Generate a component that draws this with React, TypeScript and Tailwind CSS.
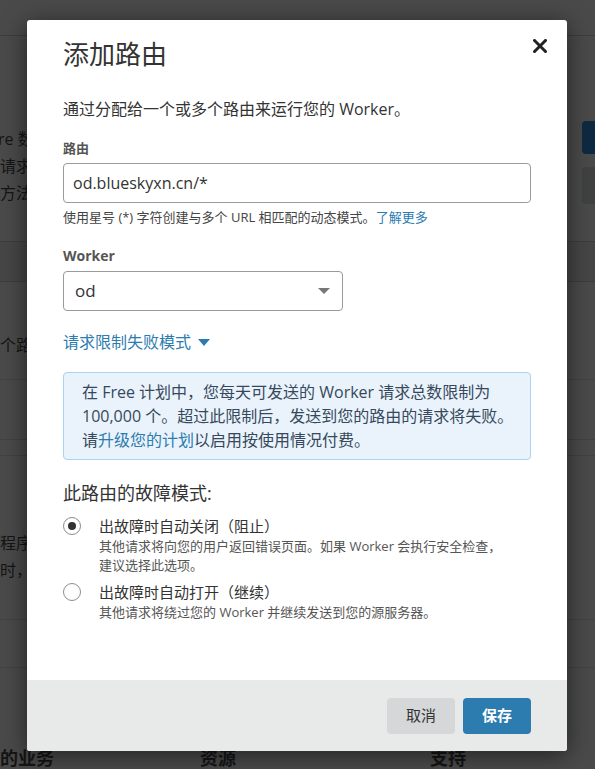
import React, { useState } from 'react';

const font = "font-['Open_Sans','Noto_Sans_CJK_SC',sans-serif]";

function BackgroundPage() {
  return (
    <div className="flex h-full w-full flex-col text-[#151515]">
      <div className="h-[36px] border-b border-[#3d3d3d]" />
      <div className="flex h-[206px] justify-between border-b border-[#3d3d3d]">
        <div className="flex flex-col pt-[90px] text-[16px] leading-[27px]">
          <span className="-ml-[2px]">re 数据</span>
          <span>请求数</span>
          <span>方法是</span>
        </div>
        <div className="flex flex-col gap-[13px] pt-[85px]">
          <div className="h-[33px] w-[13px] rounded-l-[4px] bg-[#0f2a40]" />
          <div className="h-[37px] w-[13px] rounded-l-[4px] bg-[#404242]" />
        </div>
      </div>
      <div className="h-[40px] border-b border-[#3d3d3d] bg-[#464646]" />
      <div className="flex h-[98px] items-end border-b border-[#424242] pb-[22px] text-[16px]">
        <span>个路由</span>
      </div>
      <div className="h-[60px] border-b border-[#424242]" />
      <div className="h-[16px] border-b border-[#424242]" />
      <div className="flex h-[164px] flex-col border-b border-[#424242] pt-[74px] text-[16px] leading-[27px]">
        <span>程序</span>
        <span>时，</span>
      </div>
      <div className="h-[48px] border-b border-[#424242]" />
      <div className="flex flex-1 items-end text-[18px] font-bold leading-[22px]">
        <span className="-ml-[18px] w-[218px]">们的业务</span>
        <span className="w-[230px]">资源</span>
        <span>支持</span>
      </div>
    </div>
  );
}

function Radio({ checked }: { checked: boolean }) {
  return (
    <span className="mt-[2px] flex h-[18px] w-[18px] shrink-0 items-center justify-center rounded-full border border-[#8c8c8c] bg-white">
      {checked && <span className="h-[8px] w-[8px] rounded-full bg-[#333]" />}
    </span>
  );
}

export default function App() {
  const [route, setRoute] = useState('od.blueskyxn.cn/*');
  const [mode, setMode] = useState<'close' | 'open'>('close');

  return (
    <div className={`relative h-[769px] w-full overflow-hidden bg-[#4a4a4a] ${font}`}>
      <BackgroundPage />

      <div className="absolute left-[27px] top-[20px] flex h-[731px] w-[540px] flex-col overflow-hidden rounded-[3px] bg-white shadow-[0_4px_24px_rgba(0,0,0,0.55)]">
        <div className="flex flex-1 flex-col px-[36px] pt-[15px]">
          <div className="flex items-start justify-between">
            <h1 className="text-[26px] leading-[38px] text-[#333]">添加路由</h1>
            <button className="mt-[4px] -mr-[16px] text-[#222]">
              <svg width="14" height="14" viewBox="0 0 14 14">
                <path d="M1.5 1.5 L12.5 12.5 M12.5 1.5 L1.5 12.5" stroke="#222" strokeWidth="3" strokeLinecap="square" />
              </svg>
            </button>
          </div>

          <p className="mt-[25px] text-[16px] leading-[22px] text-[#333]">通过分配给一个或多个路由来运行您的 Worker。</p>

          <label className="mt-[19px] text-[13px] font-bold leading-[18px] text-[#555]">路由</label>
          <input
            value={route}
            onChange={(e) => setRoute(e.target.value)}
            className="mt-[6px] h-[40px] w-full rounded-[4px] border border-[#9a9a9a] px-[9px] text-[16px] text-[#333] outline-none"
          />
          <p className="mt-[4px] text-[13px] leading-[20px] text-[#444]">
            使用星号 (*) 字符创建与多个 URL 相匹配的动态模式。<span className="text-[#2c7cb0]">了解更多</span>
          </p>

          <label className="mt-[20px] text-[14px] font-bold leading-[18px] text-[#555]">Worker</label>
          <div className="mt-[6px] flex h-[40px] w-[280px] items-center justify-between rounded-[4px] border border-[#9a9a9a] pl-[11px] pr-[12px]">
            <span className="text-[17px] text-[#333]">od</span>
            <svg width="12" height="7" viewBox="0 0 12 7">
              <path d="M0 0 L12 0 L6 6 Z" fill="#777" />
            </svg>
          </div>

          <div className="mt-[19px] flex items-center gap-[7px] text-[16px] leading-[24px] text-[#2c7cb0]">
            <span>请求限制失败模式</span>
            <svg width="12" height="7" viewBox="0 0 12 7">
              <path d="M0 0 L12 0 L6 7 Z" fill="#2c7cb0" />
            </svg>
          </div>

          <div className="mt-[18px] rounded-[4px] border border-[#a9d3ee] bg-[#eaf3fb] py-[7px] pl-[18px] pr-[3px] text-[16px] leading-[24px] text-[#36495c]">
            在 Free 计划中，您每天可发送的 Worker 请求总数限制为 100,000 个。超过此限制后，发送到您的路由的请求将失败。请<span className="text-[#2c7cb0]">升级您的计划</span>以启用按使用情况付费。
          </div>

          <p className="mt-[21px] text-[18px] leading-[24px] text-[#333]">此路由的故障模式:</p>

          <div className="mt-[10px] flex cursor-pointer gap-[18px] pr-[20px]" onClick={() => setMode('close')}>
            <Radio checked={mode === 'close'} />
            <div className="flex flex-col">
              <span className="text-[15px] leading-[22px] text-[#333]">出故障时自动关闭（阻止）</span>
              <span className="text-[13px] leading-[19px] text-[#555]">其他请求将向您的用户返回错误页面。如果 Worker 会执行安全检查，建议选择此选项。</span>
            </div>
          </div>

          <div className="mt-[6px] flex cursor-pointer gap-[18px] pr-[20px]" onClick={() => setMode('open')}>
            <Radio checked={mode === 'open'} />
            <div className="flex flex-col">
              <span className="text-[15px] leading-[22px] text-[#333]">出故障时自动打开（继续）</span>
              <span className="text-[13px] leading-[19px] text-[#555]">其他请求将绕过您的 Worker 并继续发送到您的源服务器。</span>
            </div>
          </div>
        </div>

        <div className="flex h-[71px] items-center justify-end gap-[8px] bg-[#e8eaea] pr-[36px]">
          <button className="h-[36px] w-[68px] rounded-[4px] bg-[#d5d7d9] text-[15px] text-[#333]">取消</button>
          <button className="h-[36px] w-[68px] rounded-[4px] bg-[#2c7cb0] text-[15px] font-bold text-white">保存</button>
        </div>
      </div>
    </div>
  );
}
